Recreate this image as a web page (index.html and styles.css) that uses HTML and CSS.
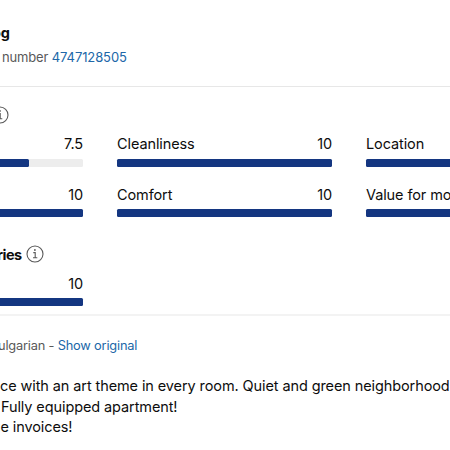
FILE: index.html
```
<!DOCTYPE html>
<html lang="en">
<head>
    <meta charset="UTF-8">
    <meta name="viewport" content="width=device-width, initial-scale=1.0">
    <title>Guest review</title>
    <link rel="stylesheet" href="styles.css">
</head>
<body>
    <div class="review">
        <header class="review-header">
            <h2 class="property">og</h2>
            <p class="booking">number <a href="#">4747128505</a></p>
        </header>

        <section class="scores">
            <div class="section-title first">
                <svg class="info" viewBox="0 0 18 18">
                    <circle cx="9" cy="9" r="8"/>
                    <path d="M7.3 7.6h1.9v5M7 12.8h4.3"/>
                    <circle class="dot" cx="8.9" cy="5" r=".9"/>
                </svg>
            </div>
            <div class="score-grid main">
                <div class="score">
                    <p class="score-label"><span></span><span>7.5</span></p>
                    <div class="bar"><div class="fill" style="width: 75%"></div></div>
                </div>
                <div class="score">
                    <p class="score-label"><span>Cleanliness</span><span>10</span></p>
                    <div class="bar"><div class="fill" style="width: 100%"></div></div>
                </div>
                <div class="score">
                    <p class="score-label"><span>Location</span></p>
                    <div class="bar"><div class="fill" style="width: 100%"></div></div>
                </div>
                <div class="score">
                    <p class="score-label"><span></span><span>10</span></p>
                    <div class="bar"><div class="fill" style="width: 100%"></div></div>
                </div>
                <div class="score">
                    <p class="score-label"><span>Comfort</span><span>10</span></p>
                    <div class="bar"><div class="fill" style="width: 100%"></div></div>
                </div>
                <div class="score">
                    <p class="score-label"><span>Value for mo</span></p>
                    <div class="bar"><div class="fill" style="width: 100%"></div></div>
                </div>
            </div>

            <div class="section-title extra">
                <h3>ries</h3>
                <svg class="info" viewBox="0 0 18 18">
                    <circle cx="9" cy="9" r="8"/>
                    <path d="M7.3 7.6h1.9v5M7 12.8h4.3"/>
                    <circle class="dot" cx="8.9" cy="5" r=".9"/>
                </svg>
            </div>
            <div class="score-grid">
                <div class="score">
                    <p class="score-label"><span></span><span>10</span></p>
                    <div class="bar"><div class="fill" style="width: 100%"></div></div>
                </div>
            </div>
        </section>

        <section class="comment">
            <p class="translation">ulgarian - <a href="#">Show original</a></p>
            <div class="comment-text">
                <p>ce with an art theme in every room. Quiet and green neighborhood</p>
                <p class="line-two">Fully equipped apartment!</p>
                <p class="line-three">ue invoices!</p>
            </div>
        </section>
    </div>
</body>
</html>
```

FILE: styles.css
```
* {
    margin: 0;
    padding: 0;
    box-sizing: border-box;
}

body {
    font-family: Inter, sans-serif;
    font-size: 14.5px;
    line-height: 20px;
    letter-spacing: -0.1px;
    background: #fff;
    color: #0d0d0d;
    overflow: hidden;
}

a {
    color: #2067a8;
    text-decoration: none;
}

.review {
    width: 450px;
    height: 450px;
    overflow: hidden;
}

/* Property name and booking number */
.review-header {
    height: 87px;
    padding-top: 23px;
    border-bottom: 1px solid #e7e7e7;
}

.property {
    margin-left: -8px;
    font-size: 14.5px;
    font-weight: 700;
}

.booking {
    margin: 4px 0 0 2px;
    font-size: 13px;
    letter-spacing: -0.15px;
    color: #595959;
}

.booking a {
    letter-spacing: -0.1px;
}

/* Scores */
.scores {
    height: 229px;
    padding-top: 19px;
    border-bottom: 2px solid #f3f3f3;
}

.section-title {
    display: flex;
    align-items: center;
    height: 18px;
    gap: 4px;
}

.section-title.first {
    margin: 0 0 10px -9px;
}

.section-title.extra {
    margin: 28px 0 11px -3px;
}

.section-title h3 {
    padding-top: 1px;
    font-size: 14.5px;
    font-weight: 700;
    letter-spacing: -0.5px;
}

.info {
    width: 18px;
    height: 18px;
    fill: none;
    stroke: #595959;
    stroke-width: 1.1;
}

.info .dot {
    fill: #595959;
    stroke: none;
}

.score-grid {
    display: grid;
    grid-template-columns: repeat(3, 215px);
    gap: 18px 34px;
    margin-left: -132px;
}

.score-label {
    display: flex;
    justify-content: space-between;
    height: 20px;
    margin-bottom: 4px;
}

.main .score:nth-child(-n+3) .score-label {
    margin-bottom: 5px;
}

.bar {
    height: 8px;
    background: #ededed;
    border-radius: 1.5px;
}

.fill {
    height: 8px;
    background: #143681;
    border-radius: 1.5px;
}

/* Comment */
.comment {
    padding-top: 20px;
}

.translation {
    margin-left: -2px;
    font-size: 12.8px;
    letter-spacing: -0.18px;
    color: #595959;
}

.comment-text {
    margin-top: 20px;
    line-height: 20.5px;
    white-space: nowrap;
}

.line-two {
    margin-left: 1px;
}

.line-three {
    margin-left: -8px;
}
```
